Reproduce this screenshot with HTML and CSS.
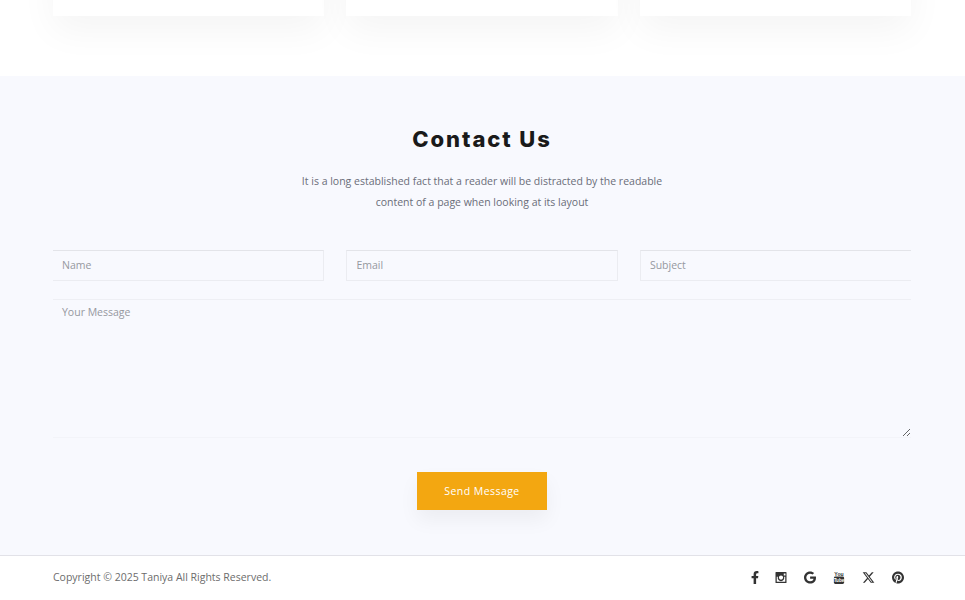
FILE: index.html
```html
<!DOCTYPE html>
<html lang="en">
<head>
<meta charset="UTF-8" />
<meta name="viewport" content="width=device-width, initial-scale=1" />
<title>Contact Us</title>
<link rel="stylesheet" href="styles.css">
</head>
<body>

<section class="cards-end">
  <div class="container card-row">
    <div class="card"></div>
    <div class="card"></div>
    <div class="card"></div>
  </div>
</section>

<section class="contact">
  <div class="container">
    <h2>Contact Us</h2>
    <p class="intro">It is a long established fact that a reader will be distracted by the readable<br>content of a page when looking at its layout</p>
    <form class="contact-form">
      <div class="field-row">
        <input class="field field-first" type="text" placeholder="Name">
        <input class="field" type="email" placeholder="Email">
        <input class="field field-last" type="text" placeholder="Subject">
      </div>
      <textarea class="message" placeholder="Your Message"></textarea>
      <button class="send-btn" type="button">Send Message</button>
    </form>
  </div>
</section>

<footer>
  <div class="container footer-row">
    <p class="copyright">Copyright © 2025 Taniya All Rights Reserved.</p>
    <div class="socials">
      <a href="#" aria-label="Facebook">
        <svg class="icon-f" viewBox="0 0 320 512"><path d="M279.14 288l14.22-92.66h-88.91v-60.13c0-25.35 12.42-50.06 52.24-50.06h40.42V6.26S260.43 0 225.36 0c-73.22 0-121.08 44.38-121.08 124.72v70.62H22.89V288h81.39v224h100.17V288z"/></svg>
      </a>
      <a href="#" aria-label="Instagram">
        <svg viewBox="0 0 24 24"><path fill-rule="evenodd" d="M2 1h20a1 1 0 0 1 1 1v20a1 1 0 0 1-1 1H2a1 1 0 0 1-1-1V2a1 1 0 0 1 1-1zm15.5 3v4h3.500V4zM3.500 10.500V20.500h17V10.500h-2.300a6.600 6.600 0 1 1-12.400 0zM12 8a4.200 4.200 0 1 0 0 8.400A4.200 4.200 0 0 0 12 8z"/></svg>
      </a>
      <a href="#" aria-label="Google">
        <svg viewBox="0 0 488 512"><path d="M488 261.8C488 403.3 391.1 504 248 504 110.8 504 0 393.2 0 256S110.8 8 248 8c66.8 0 123 24.5 166.3 64.9l-67.5 64.9C258.5 52.6 94.3 116.6 94.3 256c0 86.500 69.100 156.600 153.700 156.600 98.200 0 135-70.400 140.800-106.900H248v-85.300h236.100c2.300 12.700 3.900 24.900 3.900 41.400z"/></svg>
      </a>
      <a href="#" aria-label="YouTube">
        <svg viewBox="0 0 24 28">
          <text class="yt-you" x="12" y="10" text-anchor="middle">You</text>
          <rect x="1" y="12" width="22" height="16" rx="3"/>
          <text class="yt-tube" x="12" y="24" text-anchor="middle">Tube</text>
        </svg>
      </a>
      <a href="#" aria-label="X">
        <svg class="icon-x" viewBox="0 0 512 512"><path d="M389.200 48h70.600L305.600 224.200 487 464H345L233.700 318.600 106.500 464H35.800L200.700 275.500 26.800 48H172.400L272.900 180.900 389.200 48zM364.400 421.800h39.100L151.100 88h-42L364.400 421.800z"/></svg>
      </a>
      <a href="#" aria-label="Pinterest">
        <svg viewBox="0 0 496 512"><path d="M496 256c0 137-111 248-248 248-25.600 0-50.200-3.900-73.400-11.100 10.100-16.500 25.200-43.500 30.800-65 3-11.600 15.400-59 15.400-59 8.100 15.400 31.700 28.500 56.800 28.500 74.800 0 128.700-68.800 128.700-154.300 0-81.900-66.900-143.200-152.900-143.200-107 0-163.900 71.800-163.900 150.100 0 36.400 19.400 81.700 50.300 96.100 4.700 2.200 7.200 1.200 8.300-3.300.8-3.400 5-20.300 6.900-28.100.6-2.500.3-4.700-1.700-7.100-10.100-12.500-18.300-35.300-18.300-56.600 0-54.700 41.400-107.600 112-107.600 60.900 0 103.600 41.500 103.600 100.900 0 67.100-33.900 113.600-78 113.600-24.300 0-42.600-20.100-36.700-44.800 7-29.500 20.500-61.300 20.500-82.600 0-19-10.200-34.900-31.400-34.900-24.900 0-44.900 25.700-44.900 60.200 0 22 7.400 36.800 7.400 36.800s-24.500 103.800-29 123.200c-5 21.400-3 51.600-.9 71.200C65.400 450.900 0 361.100 0 256 0 119 111 8 248 8s248 111 248 248z"/></svg>
      </a>
    </div>
  </div>
</footer>

</body>
</html>
```
FILE: styles.css
```css
* {
  box-sizing: border-box;
}
body {
  margin: 0;
  font-family: "Open Sans", sans-serif;
  background: #fff;
  color: #666;
}
.container {
  width: 858px;
  margin: 0 53px;
}

/* bottom edge of the cards above, the rest is scrolled off */
.cards-end {
  display: flow-root;
  height: 76px;
  background: #fff;
}
.card-row {
  display: grid;
  grid-template-columns: repeat(3, 1fr);
  gap: 22.4px;
  margin-top: -284px;
}
.card {
  height: 300px;
  background: #fff;
  box-shadow: 0 15px 35px rgba(0,0,0,0.045);
}

.contact {
  height: 479px;
  padding-top: 49px;
  background: #f8f9fe;
  text-align: center;
}
.contact h2 {
  margin: 0;
  font-family: Inter, sans-serif;
  font-size: 22px;
  line-height: 28px;
  font-weight: 800;
  letter-spacing: 1.9px;
  color: #1a1a1a;
}
.intro {
  margin: 18px 0 0;
  font-size: 10.5px;
  line-height: 21px;
  color: #6a6d79;
}

.contact-form {
  margin-top: 37px;
}
.field-row {
  display: grid;
  grid-template-columns: repeat(3, 1fr);
  gap: 22.4px;
}
.field, .message {
  display: block;
  width: 100%;
  padding: 0 9px;
  font-family: "Open Sans", sans-serif;
  font-size: 10.5px;
  color: #666;
  background: transparent;
  border: 1px solid #ebecf1;
  border-top-color: #e3e4e9;
  border-radius: 0;
  outline: none;
}
.field {
  height: 31px;
  padding-bottom: 2px;
}
.field-first {
  border-left: none;
}
.field-last {
  border-right: none;
}
.field::placeholder, .message::placeholder {
  color: #96989f;
  opacity: 1;
}
.message {
  height: 139px;
  margin-top: 18px;
  padding-top: 5px;
  border-left: none;
  border-right: none;
  border-top-color: #eeeff4;
  border-bottom-color: #f3f4f9;
  resize: vertical;
}
.send-btn {
  display: block;
  width: 130px;
  height: 38px;
  margin: 34px auto 0;
  padding: 0;
  font-family: "Open Sans", sans-serif;
  font-size: 10.5px;
  font-weight: 500;
  letter-spacing: 0.45px;
  color: #fff;
  background: #f3a711;
  border: none;
  box-shadow: 0 10px 20px rgba(0,0,0,0.05);
  cursor: pointer;
}

footer {
  height: 45px;
  background: #fff;
  border-top: 1px solid #e2e2e8;
}
.footer-row {
  display: flex;
  justify-content: space-between;
  align-items: center;
  height: 42px;
}
.copyright {
  margin: 0;
  font-size: 10.5px;
  color: #6c6c6c;
}
.socials {
  display: flex;
  align-items: center;
  gap: 17px;
  padding-right: 7px;
}
.socials a {
  display: block;
  height: 13px;
  color: #333;
}
.socials a:first-child {
  margin-right: -1px;
}
.socials svg {
  display: block;
  height: 13px;
  width: 12px;
  fill: currentColor;
}
.socials .icon-f {
  width: 8px;
}
.socials .icon-x {
  width: 13px;
}
.yt-you {
  font-family: "Liberation Sans", sans-serif;
  font-size: 11px;
  font-weight: 700;
}
.yt-tube {
  font-family: "Liberation Sans", sans-serif;
  font-size: 10px;
  font-weight: 700;
  fill: #fff;
}
```
